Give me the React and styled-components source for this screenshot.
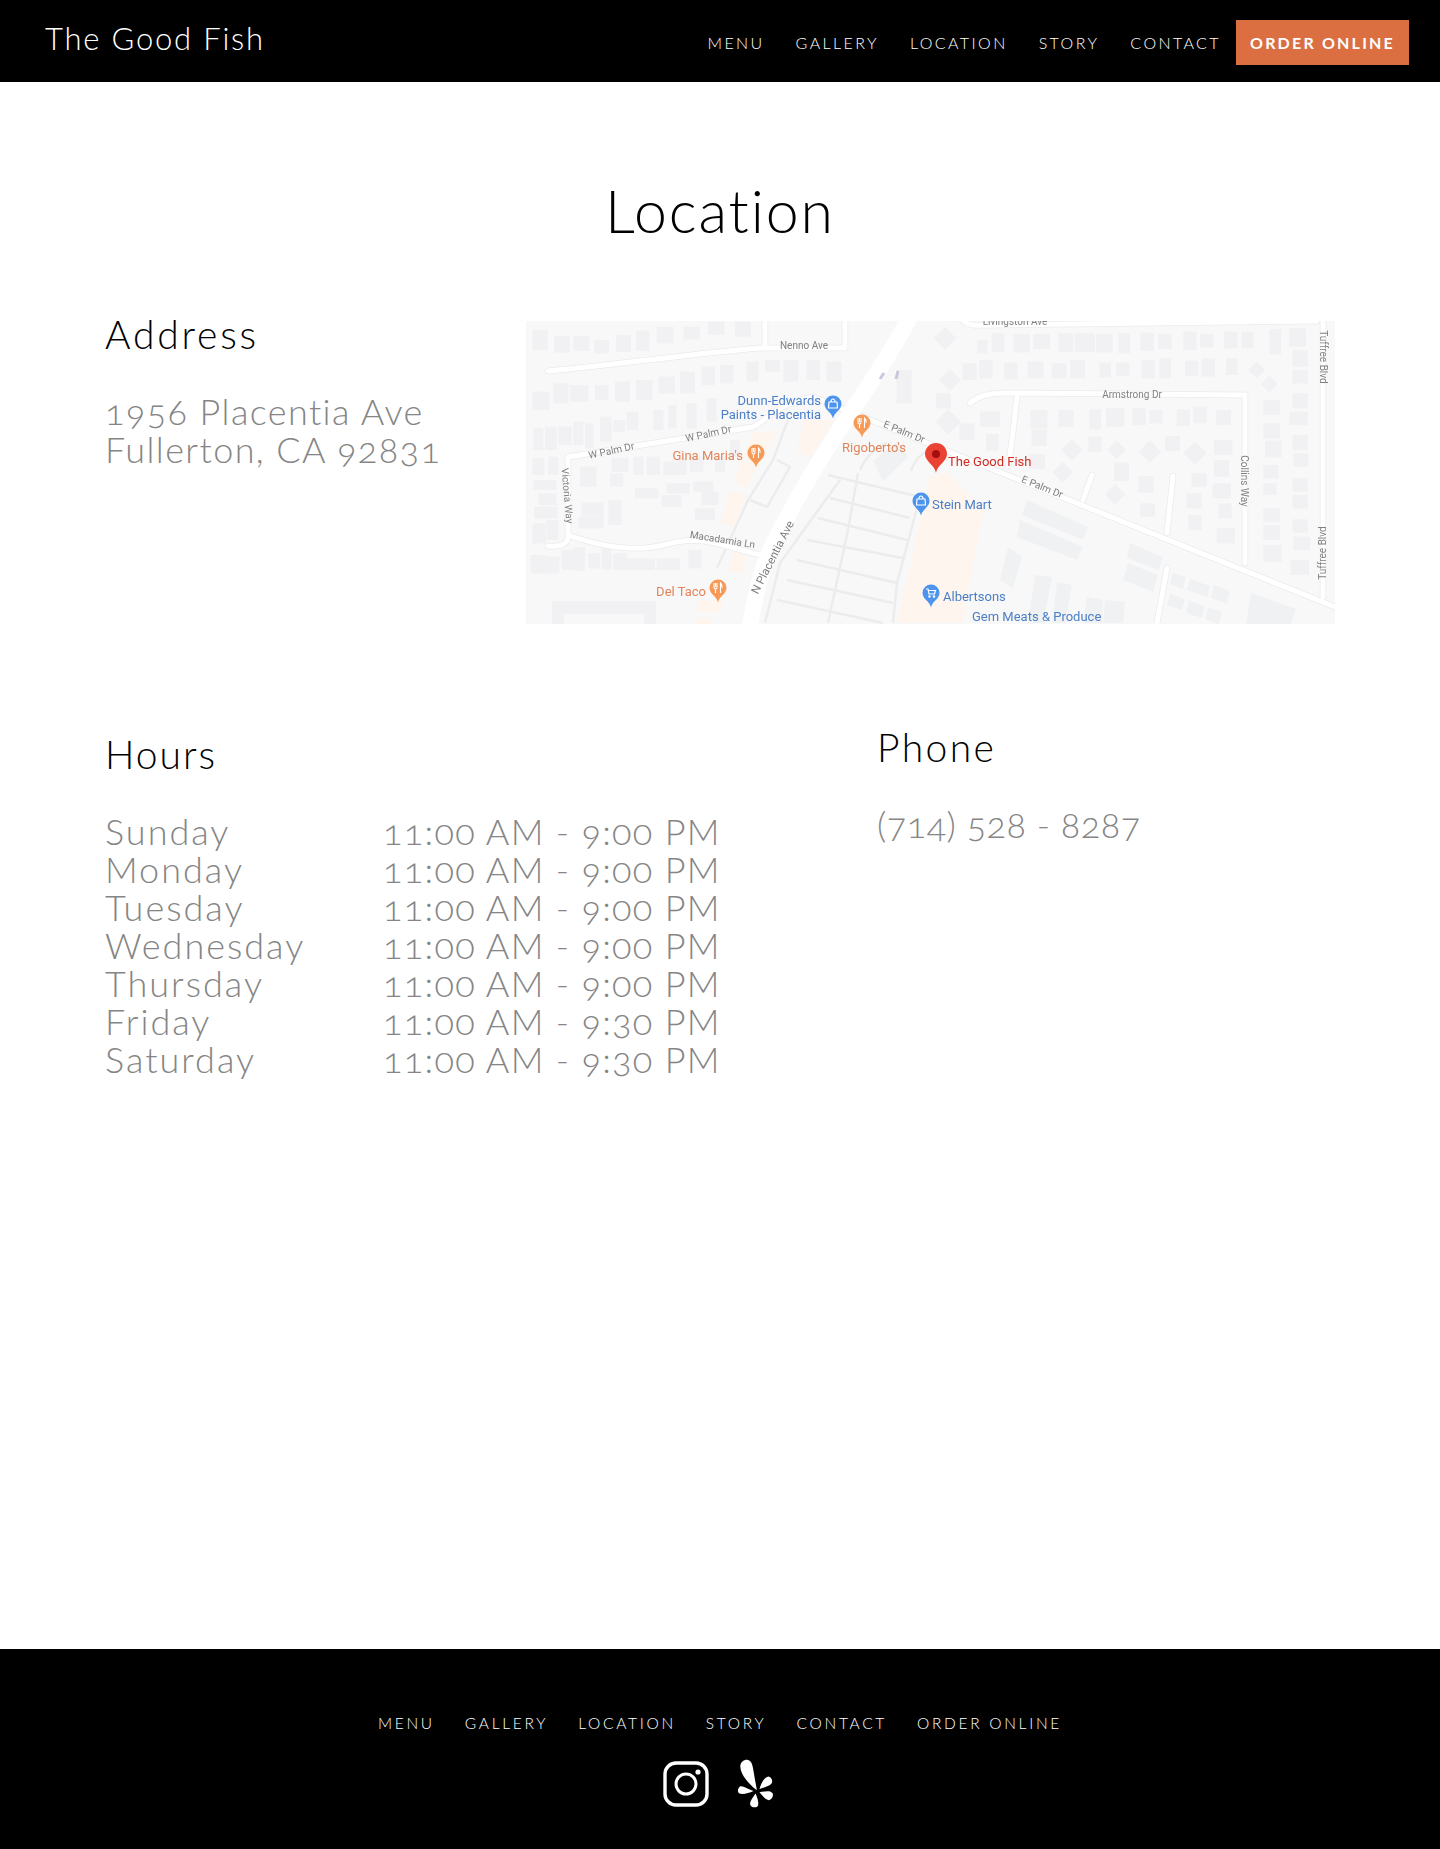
import React from "react";
import styled, { createGlobalStyle } from "styled-components";

const GlobalStyles = createGlobalStyle`
  * { box-sizing: border-box; }
  body {
    margin: 0;
    background: #fff;
    font-family: "Lato", "Open Sans", sans-serif;
    font-weight: 300;
    font-variant-numeric: oldstyle-nums;
  }
`;

const Page = styled.div`
  display: flex;
  flex-direction: column;
  min-height: 1849px;
`;

const Header = styled.header`
  height: 82px;
  background: #000;
  display: flex;
  justify-content: space-between;
  padding: 19px 31px 0 45px;
`;

const Brand = styled.a`
  color: #fff;
  font-size: 31px;
  line-height: 38px;
  letter-spacing: 1.8px;
`;

const Nav = styled.nav`
  display: flex;
  align-items: center;
  margin-top: 1px;
  height: 45px;
  gap: 31px;
`;

const NavLink = styled.a`
  color: #fff;
  font-size: 16px;
  letter-spacing: 2.4px;
  white-space: nowrap;
`;

const OrderButton = styled.a`
  display: flex;
  align-items: center;
  justify-content: center;
  width: 173px;
  height: 45px;
  margin-left: -16px;
  background: #dc6f41;
  color: #fff;
  font-size: 16px;
  font-weight: 700;
  letter-spacing: 2.2px;
`;

const Main = styled.main`
  flex: 1;
  padding: 0 105px;
`;

const PageTitle = styled.h1`
  margin: 0;
  padding-top: 97px;
  text-align: center;
  font-size: 59px;
  line-height: 64px;
  font-weight: 300;
  letter-spacing: 1.9px;
  color: #000;
`;

const AddressRow = styled.section`
  display: grid;
  grid-template-columns: 421px 809px;
  margin-top: 68px;
`;

const InfoRow = styled.section`
  display: grid;
  grid-template-columns: 772px 1fr;
  margin-top: 100px;
`;

const Block = styled.div`
  padding-top: ${(p) => p.$top || 0}px;
`;

const Heading = styled.h2`
  margin: 0 0 ${(p) => p.$gap || 35}px;
  font-size: 39px;
  line-height: 46px;
  font-weight: 300;
  letter-spacing: ${(p) => p.$spacing || 2}px;
  color: #000;
`;

const Detail = styled.p`
  margin: 0;
  font-size: 36px;
  line-height: 38px;
  letter-spacing: ${(p) => p.$spacing || 1.4}px;
  color: #858585;
`;

const HoursRow = styled.div`
  display: grid;
  grid-template-columns: 278px 1fr;
  font-size: 36px;
  line-height: 38px;
  color: #858585;
`;

const Day = styled.span`
  letter-spacing: 2px;
`;

const Time = styled.span`
  letter-spacing: 1.3px;
`;

const MapFrame = styled.svg`
  display: block;
  width: 809px;
  height: 303px;
  margin-top: 10px;
  background: #f8f8f8;
  font-family: "Roboto", sans-serif;
  font-weight: 400;
  font-variant-numeric: normal;
  filter: blur(0.3px);
`;

const RoadLabel = styled.text`
  font-size: ${(p) => p.$size || 10}px;
  fill: #808080;
  text-anchor: middle;
`;

const PlaceLabel = styled.text`
  font-size: 13px;
  fill: ${(p) => p.$color};
  text-anchor: ${(p) => p.$anchor || "start"};
`;

const Footer = styled.footer`
  height: 200px;
  background: #000;
  display: flex;
  flex-direction: column;
  align-items: center;
  padding-top: 65px;
`;

const FooterNav = styled.nav`
  display: flex;
  align-items: center;
  gap: 30px;
`;

const FooterLink = styled(NavLink)`
  font-size: 15.5px;
  letter-spacing: 2.7px;
`;

const Social = styled.div`
  display: flex;
  align-items: center;
  gap: 28px;
  margin: 27px 4px 0 0;
`;

const hours = [
  ["Sunday", "11:00 AM - 9:00 PM"],
  ["Monday", "11:00 AM - 9:00 PM"],
  ["Tuesday", "11:00 AM - 9:00 PM"],
  ["Wednesday", "11:00 AM - 9:00 PM"],
  ["Thursday", "11:00 AM - 9:00 PM"],
  ["Friday", "11:00 AM - 9:30 PM"],
  ["Saturday", "11:00 AM - 9:30 PM"],
];

const links = ["MENU", "GALLERY", "LOCATION", "STORY", "CONTACT"];

// house footprints as read off the reference, [x, y, w, h] at 3x
const housesWest = [
  [38,60,45,60],[102,78,48,50],[160,78,48,45],[222,90,45,40],[288,75,45,50],[348,62,40,60],[410,50,50,50],[490,50,50,38],[565,35,48,40],[645,35,48,45],
  [680,155,35,60],[735,150,45,35],[790,150,45,65],[860,150,40,60],[920,155,45,60],[600,165,40,55],[545,170,40,55],[480,185,45,65],[415,200,50,50],[348,210,50,60],[285,215,45,60],[225,225,40,45],[150,225,55,50],[100,220,45,60],[38,245,50,55],
  [560,265,30,70],[500,280,30,75],[445,285,25,70],[400,300,30,60],[320,305,35,55],[280,330,35,35],[240,320,35,75],[195,340,25,75],[160,335,30,70],[115,350,40,55],[75,350,35,70],[40,355,30,65],[630,390,30,50],
  [38,445,35,50],[85,440,30,55],[180,470,50,30],[275,445,50,40],[340,440,30,55],[380,440,40,55],[430,455,40,40],[470,445,30,50],[510,440,40,45],[585,440,30,45],[40,510,70,30],[180,495,50,35],[270,490,40,40],[345,535,70,30],[440,520,70,30],[520,515,60,30],[545,545,50,40],[425,555,60,35],[55,550,55,35],[185,578,65,40],[265,570,40,75],[42,590,70,35],[525,595,60,35],[175,620,75,35],[38,640,40,60],[80,630,35,60],
  [32,735,45,55],[78,740,40,50],[125,720,40,60],[160,712,35,70],[205,730,35,45],[245,708,30,70],[280,730,40,50],[320,745,50,35],[370,745,35,35],[410,745,70,35],[505,720,40,55],
  [1130,180,45,100],
];

const housesEast = [
  [172,90,30,40],[215,70,38,55],[280,72,50,55],[340,72,50,45],[415,70,45,55],[465,70,60,55],[528,72,50,55],[595,70,35,60],[662,68,40,55],[715,72,40,45],[790,65,40,55],[840,72,40,40],[912,65,40,50],[965,65,35,50],[1048,58,35,75],[1108,55,50,55],
  [128,160,42,50],[178,150,40,55],[252,158,40,50],[322,155,48,50],[395,160,45,45],[450,150,45,55],[538,158,35,45],[588,158,40,40],[665,150,40,55],[718,145,35,60],[795,152,40,45],[845,145,40,55],[918,145,35,50],[1118,120,45,50],[1118,180,45,40],
  [332,300,50,55],[415,300,45,50],[508,298,35,60],[558,295,55,55],[638,295,40,50],[688,300,40,40],[770,298,40,50],[820,290,40,50],[888,300,45,45],[1118,250,45,45],[1108,305,55,40],[1030,270,50,45],[1030,340,50,45],
  [335,358,45,50],[505,380,40,45],[198,372,38,50],[118,340,45,50],[180,305,60,45],[735,378,45,45],[882,390,55,45],[1035,392,50,50],[1118,375,45,45],[1120,430,45,40],[48,250,45,45],
  [325,432,50,45],[582,458,45,55],[882,450,45,50],[1030,465,45,40],[815,490,45,40],[878,520,55,45],[1118,505,45,40],[1030,520,40,35],[655,498,45,50],[800,550,45,45],[660,580,45,40],[895,580,40,45],[1118,555,45,40],[1030,595,50,40],[805,615,40,45],[890,655,55,45],[1118,628,45,40],[1030,645,50,45],[1120,680,50,40],[1030,705,55,50],[1112,750,55,45],
];

const diamonds = [
  [75,85,24],[90,210,24],[85,335,27],[455,420,23],[590,420,20],[690,425,24],[825,430,25],[428,487,22],[585,553,22],[1010,180,18],[1048,222,18],
];

// larger commercial footprints in map space
const lots = [
  "501,179 562,206 557,219 496,194",
  "494,199 557,226 551,239 491,216",
  "604,222 637,236 632,249 601,237",
  "602,242 632,254 627,271 597,259",
  "482,226 496,236 487,267 474,259",
  "509,254 526,256 517,302 502,302",
  "531,261 546,264 539,302 526,302",
  "561,276 577,279 576,302 557,302",
  "579,279 599,281 597,302 577,302",
  "647,252 660,256 657,268 644,263",
  "664,258 684,265 681,276 661,269",
  "688,264 704,270 701,283 685,277",
  "644,273 659,278 656,289 641,284",
  "663,280 679,285 676,297 660,292",
  "682,286 696,291 693,303 679,298",
  "725,272 770,288 765,303 720,303",
  "347,140 372,120 382,136 357,160",
];

const stores = [
  "404,156 422,152 457,189 437,302 371,302",
  "227,112 251,109 221,166 207,162",
  "204,169 221,174 207,206 194,202",
  "277,99 309,99 284,137 271,132",
  "207,229 221,236 217,252 202,251",
  "171,279 197,279 196,291 171,291",
  "169,297 186,297 186,303 169,303",
];

const roads = [
  "M22 50 C90 44 170 32 234 27 L319 27 M239 0 V27 M319 0 V27",
  "M42 136 L42 216 C42 224 32 226 22 225 M42 214 C70 224 100 230 127 226 C150 222 160 216 190 222 L241 236",
  "M42 136 L227 106 C240 100 248 84 287 76 L809 286",
  "M444 82 C456 72 470 72 489 72 L719 74 V242 M491 76 C488 100 486 125 482 145",
  "M566 154 L557 179 M647 155 L641 212 M641 247 L631 302",
  "M437 0 C445 6 452 4 470 4 L791 0 M797 0 V276",
];

const serviceRoads = [
  "M262 99 L247 139 L222 179 L191 247",
  "M251 139 L264 146 L241 186 L224 179",
  "M302 154 L394 176 M304 177 L384 197 M292 197 L381 219 M281 219 L377 237 M271 239 L371 262 M261 259 L367 282 M251 279 L357 302",
  "M314 159 L254 242 L239 302 M332 152 L322 209 L302 302 M394 176 L371 262 L367 302",
  "M334 149 C340 135 352 125 361 122 M385 150 C390 135 400 128 410 130",
];

const Pin = ({ x, y, color, r = 8.5, inner }) => (
  <g>
    <path
      d={`M${x} ${y + r * 1.72} C${x - 1} ${y + r} ${x - r} ${y + r * 0.7} ${x - r} ${y} A${r} ${r} 0 1 1 ${x + r} ${y} C${x + r} ${y + r * 0.7} ${x + 1} ${y + r} ${x} ${y + r * 1.72} Z`}
      fill={color}
    />
    {inner}
  </g>
);

const FoodGlyph = ({ x, y }) => (
  <path
    d={`M${x - 4} ${y - 5} V${y - 1} Q${x - 4} ${y + 1} ${x - 2.5} ${y + 1} V${y + 5} M${x - 2.5} ${y - 5} V${y - 1} M${x - 1} ${y - 5} V${y - 1} Q${x - 1} ${y + 1} ${x - 2.5} ${y + 1} M${x + 2.5} ${y + 5} V${y - 5} Q${x + 4.5} ${y - 3} ${x + 4} ${y}`}
    fill="none"
    stroke="#fff"
    strokeWidth="1.1"
  />
);

const ShopGlyph = ({ x, y }) => (
  <g fill="none" stroke="#fff" strokeWidth="1.2">
    <path d={`M${x - 4} ${y - 2} H${x + 4} L${x + 4.5} ${y + 4} H${x - 4.5} Z`} />
    <path d={`M${x - 2} ${y - 2} C${x - 2} ${y - 6} ${x + 2} ${y - 6} ${x + 2} ${y - 2}`} />
  </g>
);

const CartGlyph = ({ x, y }) => (
  <g fill="none" stroke="#fff" strokeWidth="1.2">
    <path d={`M${x - 5} ${y - 4} H${x - 3} L${x - 2} ${y + 1} H${x + 3.5} L${x + 4.5} ${y - 2.5} H${x - 2.6}`} />
    <circle cx={x - 1.5} cy={y + 3.5} r="0.7" />
    <circle cx={x + 3} cy={y + 3.5} r="0.7" />
  </g>
);

const LocationMap = () => (
  <MapFrame viewBox="0 0 809 303">
    {stores.map((points) => <polygon key={points} points={points} fill="#fdf5ee" />)}

    {housesWest.map(([x, y, w, h]) => (
      <rect key={`w${x}-${y}`} x={x / 3 - 6} y={y / 3 - 11} width={w / 3} height={h / 3} fill="#f1f1f3" />
    ))}
    {housesEast.map(([x, y, w, h]) => (
      <rect key={`e${x}-${y}`} x={x / 3 + 394} y={y / 3 - 11} width={w / 3} height={h / 3} fill="#f1f1f3" />
    ))}
    {diamonds.map(([x, y, d]) => {
      const cx = x / 3 + 394;
      const cy = y / 3 - 11;
      return <rect key={`d${x}-${y}`} x={cx - d / 3} y={cy - d / 3} width={(d * 2) / 3} height={(d * 2) / 3} transform={`rotate(45 ${cx} ${cy})`} fill="#f1f1f3" />;
    })}
    {lots.map((points) => <polygon key={points} points={points} fill="#f0f1f3" />)}
    <path d="M26 280 H130 V303 H118 V293 H38 V303 H26 Z" fill="#f1f1f3" />

    <g fill="none" stroke="#ececec" strokeWidth="2.5">
      {serviceRoads.map((d) => <path key={d} d={d} />)}
    </g>
    <g fill="none" stroke="#ebebeb" strokeWidth="6.5" strokeLinecap="round">
      {roads.map((d) => <path key={d} d={d} />)}
    </g>
    <g fill="none" stroke="#fff" strokeWidth="5" strokeLinecap="round">
      {roads.map((d) => <path key={d} d={d} />)}
    </g>
    <path d="M384 -4 C366 30 345 62 311 112 C290 145 262 190 241 236 C232 260 228 280 224 306" fill="none" stroke="#fff" strokeWidth="16" />
    <path d="M358 52 L354 58 M372 50 L370 58" stroke="#c6c9dc" strokeWidth="3" />

    <RoadLabel x="278" y="28">Nenno Ave</RoadLabel>
    <RoadLabel x="86" y="133" transform="rotate(-12 86 133)">W Palm Dr</RoadLabel>
    <RoadLabel x="183" y="116" transform="rotate(-12 183 116)">W Palm Dr</RoadLabel>
    <RoadLabel x="38" y="175" transform="rotate(85 38 175)">Victoria Way</RoadLabel>
    <RoadLabel x="196" y="222" transform="rotate(9 196 222)">Macadamia Ln</RoadLabel>
    <RoadLabel $size={11.5} x="250" y="238" transform="rotate(-63 250 238)">N Placentia Ave</RoadLabel>
    <RoadLabel x="377" y="114" transform="rotate(22 377 114)">E Palm Dr</RoadLabel>
    <RoadLabel x="515" y="169" transform="rotate(22 515 169)">E Palm Dr</RoadLabel>
    <RoadLabel x="606" y="77">Armstrong Dr</RoadLabel>
    <RoadLabel x="715" y="160" transform="rotate(90 715 160)">Collins Way</RoadLabel>
    <RoadLabel x="794" y="36" transform="rotate(90 794 36)">Tuffree Blvd</RoadLabel>
    <RoadLabel x="800" y="232" transform="rotate(-90 800 232)">Tuffree Blvd</RoadLabel>
    <RoadLabel x="489" y="4">Livingston Ave</RoadLabel>

    <PlaceLabel $color="#4a7fc7" $anchor="end" x="295" y="84">Dunn-Edwards</PlaceLabel>
    <PlaceLabel $color="#4a7fc7" $anchor="end" x="295" y="98">Paints - Placentia</PlaceLabel>
    <PlaceLabel $color="#e0855a" x="316" y="131">Rigoberto's</PlaceLabel>
    <PlaceLabel $color="#e0855a" $anchor="end" x="217" y="139">Gina Maria's</PlaceLabel>
    <PlaceLabel $color="#e0855a" $anchor="end" x="180" y="275">Del Taco</PlaceLabel>
    <PlaceLabel $color="#d12c24" x="422" y="145">The Good Fish</PlaceLabel>
    <PlaceLabel $color="#4a7fc7" x="406" y="188">Stein Mart</PlaceLabel>
    <PlaceLabel $color="#4a7fc7" x="417" y="280">Albertsons</PlaceLabel>
    <PlaceLabel $color="#4a7fc7" x="446" y="300">Gem Meats &amp; Produce</PlaceLabel>

    <Pin x={307} y={83} color="#4d94ee" inner={<ShopGlyph x={307} y={83} />} />
    <Pin x={395} y={180} color="#4d94ee" inner={<ShopGlyph x={395} y={180} />} />
    <Pin x={405} y={272} color="#4d94ee" inner={<CartGlyph x={405} y={272} />} />
    <Pin x={336} y={102} color="#f79a57" inner={<FoodGlyph x={336} y={102} />} />
    <Pin x={230} y={132} color="#f79a57" inner={<FoodGlyph x={230} y={132} />} />
    <Pin x={192} y={267} color="#f79a57" inner={<FoodGlyph x={192} y={267} />} />
    <Pin x={410} y={133} color="#ea4335" r={11} inner={<circle cx="410" cy="133" r="4" fill="#a50e0e" />} />
  </MapFrame>
);

const InstagramIcon = () => (
  <svg width="46" height="46" viewBox="0 0 46 46" fill="none" stroke="#fff" strokeWidth="3.4">
    <rect x="2" y="2" width="42" height="42" rx="11" />
    <circle cx="23" cy="23" r="10" strokeWidth="3" />
    <circle cx="35" cy="11" r="2.6" fill="#fff" stroke="none" />
  </svg>
);

const YelpIcon = () => (
  <svg width="37" height="50" viewBox="262 28 112 150" fill="#fff">
    <path d="M322 122 C300 105 272 75 272 50 C272 35 285 28 295 30 C308 33 310 50 313 70 C316 90 320 105 322 122 Z" />
    <path d="M330 118 C335 100 345 82 357 80 C367 82 372 95 366 102 C358 110 345 113 330 118 Z" />
    <path d="M312 124 C295 118 280 108 272 110 C264 115 262 128 270 132 C280 136 298 130 312 124 Z" />
    <path d="M330 128 C345 125 362 122 369 130 C374 138 368 150 358 152 C348 150 338 138 330 128 Z" />
    <path d="M318 132 C310 145 298 158 303 168 C308 175 322 176 326 168 C328 158 324 145 318 132 Z" />
  </svg>
);

export default function App() {
  return (
    <Page>
      <GlobalStyles />
      <Header>
        <Brand>The Good Fish</Brand>
        <Nav>
          {links.map((l) => <NavLink key={l}>{l}</NavLink>)}
          <OrderButton>ORDER ONLINE</OrderButton>
        </Nav>
      </Header>
      <Main>
        <PageTitle>Location</PageTitle>
        <AddressRow>
          <Block>
            <Heading $spacing={2.8}>Address</Heading>
            <Detail $spacing={1.4}>1956 Placentia Ave</Detail>
            <Detail $spacing={1.4}>Fullerton, CA 92831</Detail>
          </Block>
          <LocationMap />
        </AddressRow>
        <InfoRow>
          <Block $top={7}>
            <Heading>Hours</Heading>
            {hours.map(([day, time]) => (
              <HoursRow key={day}>
                <Day>{day}</Day>
                <Time>{time}</Time>
              </HoursRow>
            ))}
          </Block>
          <Block>
            <Heading $spacing={2.4}>Phone</Heading>
            <Detail $spacing={0.5}>(714) 528 - 8287</Detail>
          </Block>
        </InfoRow>
      </Main>
      <Footer>
        <FooterNav>
          {[...links, "ORDER ONLINE"].map((l) => <FooterLink key={l}>{l}</FooterLink>)}
        </FooterNav>
        <Social>
          <InstagramIcon />
          <YelpIcon />
        </Social>
      </Footer>
    </Page>
  );
}
